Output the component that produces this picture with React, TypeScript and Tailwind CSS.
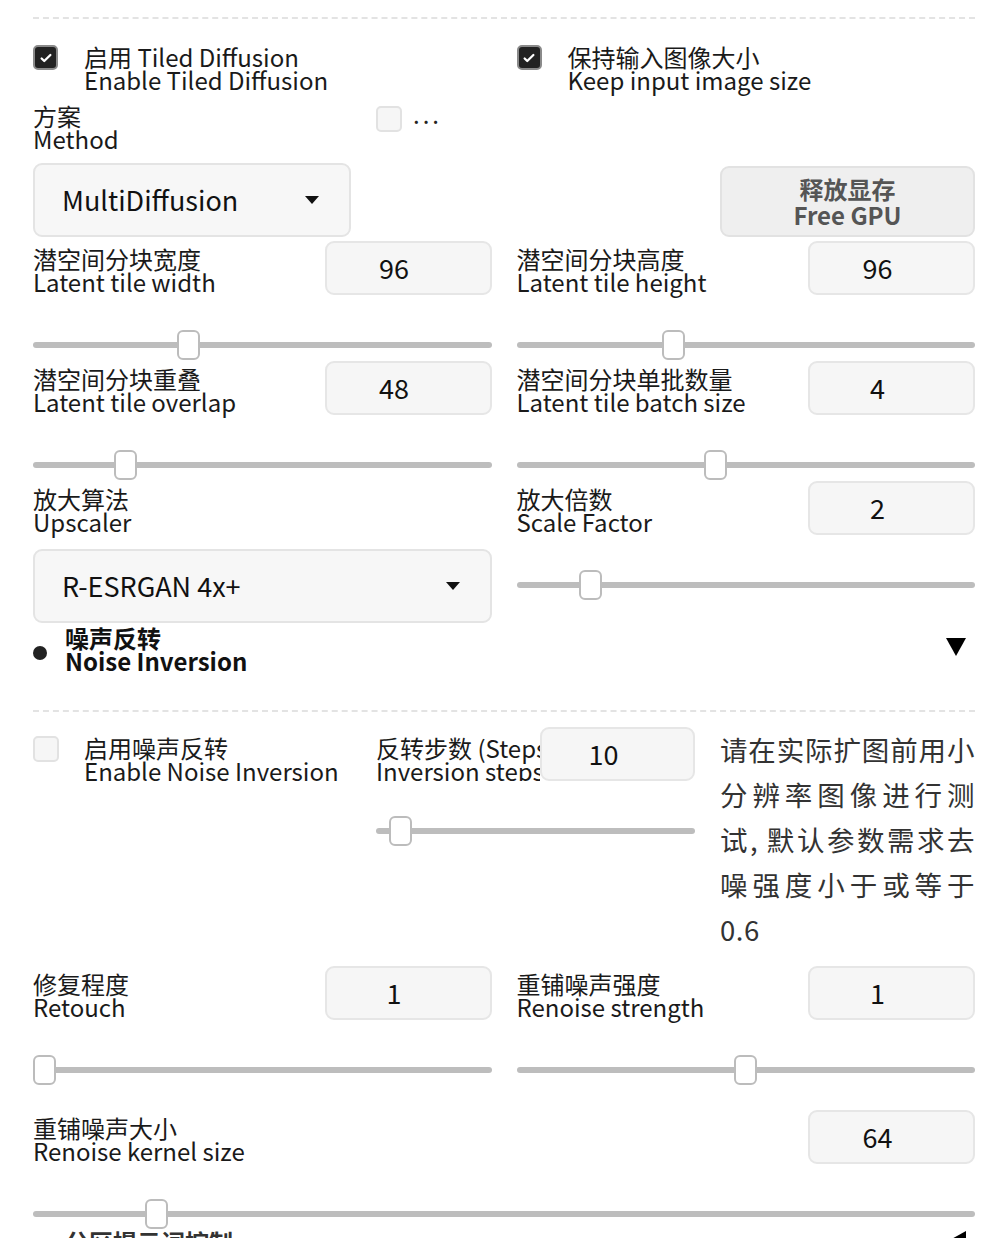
import React from 'react';

const FONT = "font-['Noto_Sans_CJK_SC','Noto_Sans',sans-serif]";

const Check = ({ checked }: { checked: boolean }) =>
  checked ? (
    <div className="w-[25px] h-[25px] shrink-0 rounded-[5px] bg-[#222] border-2 border-[#8a8a8a] flex items-center justify-center">
      <svg viewBox="0 0 16 16" className="w-[14px] h-[14px]">
        <path d="M3 8.5l3 3 7-7" fill="none" stroke="#fff" strokeWidth="2.6" strokeLinecap="round" strokeLinejoin="round" />
      </svg>
    </div>
  ) : (
    <div className="w-[26px] h-[26px] shrink-0 rounded-[5px] bg-[#f6f6f6] border-2 border-[#e2e2e2]" />
  );

const Label = ({ zh, en, bold }: { zh: string; en: string; bold?: boolean }) => (
  <div className={`text-[24px] leading-none whitespace-nowrap ${bold ? 'font-bold text-[#111]' : 'text-[#1a1a1a]'}`}>
    <div className="h-[23px]">{zh}</div>
    <div className="h-[25px]">{en}</div>
  </div>
);

const NumBox = ({ value, w = 'w-[167px]' }: { value: string; w?: string }) => (
  <div className={`${w} h-[54px] shrink-0 rounded-[9px] bg-[#f6f6f6] border-2 border-[#e6e6e6] flex items-center justify-center pr-[28px] text-[27px] text-[#111]`}>
    {value}
  </div>
);

// f = thumb position as a fraction of the free track length
const Slider = ({ f }: { f: number }) => (
  <div className="relative h-[66px]">
    <div className="absolute left-0 right-0 top-[47px] h-[6px] rounded-full bg-[#bdbdbd]" />
    <div
      className="absolute top-[35px] w-[23px] h-[30px] rounded-[6px] bg-white border-2 border-[#bcbcbc]"
      style={{ left: `calc((100% - 23px) * ${f})` }}
    />
  </div>
);

const SliderBlock = ({ zh, en, value, f, w }: { zh: string; en: string; value: string; f: number; w?: string }) => (
  <div className="flex flex-col">
    <div className="flex justify-between h-[54px]">
      <div className="pt-[6px]">
        <Label zh={zh} en={en} />
      </div>
      <NumBox value={value} w={w} />
    </div>
    <Slider f={f} />
  </div>
);

const Caret = () => (
  <svg viewBox="0 0 14 8" className="w-[14px] h-[8px]">
    <path d="M0 0h14L7 8z" fill="#111" />
  </svg>
);

const Dropdown = ({ value, h }: { value: string; h: string }) => (
  <div className={`${h} rounded-[9px] bg-[#f7f7f7] border-2 border-[#e4e4e4] flex items-center justify-between pl-[27px] pr-[30px] text-[27px] text-[#111]`}>
    <span>{value}</span>
    <Caret />
  </div>
);

export default function App() {
  return (
    <div className={`${FONT} bg-white h-[1238px] overflow-hidden pl-[33px] pr-[25px] pt-[17px]`}>
      <div className="border-t-2 border-dashed border-[#e3e3e3]" />

      {/* Tiled Diffusion settings */}
      <div className="grid grid-cols-2 gap-x-[25px] pt-[26px]">
        <div className="flex flex-col">
          <div className="flex items-start gap-[26px] h-[50px]">
            <Check checked />
            <Label zh="启用 Tiled Diffusion" en="Enable Tiled Diffusion" />
          </div>
          <div className="flex items-start mt-[9px] h-[48px]">
            <div className="w-[343px]">
              <Label zh="方案" en="Method" />
            </div>
            <div className="flex items-center gap-[11px] mt-[2px]">
              <Check checked={false} />
              <span className="text-[24px] leading-none text-[#222] -mt-[10px] tracking-[3px]">...</span>
            </div>
          </div>
          <div className="mt-[11px] mb-[4px] w-[318px]">
            <Dropdown value="MultiDiffusion" h="h-[74px]" />
          </div>
        </div>
        <div className="flex flex-col">
          <div className="flex items-start gap-[26px] h-[50px]">
            <Check checked />
            <Label zh="保持输入图像大小" en="Keep input image size" />
          </div>
          <div className="flex-1" />
          <div className="self-end w-[255px] h-[71px] mb-[4px] rounded-[9px] bg-[#efefef] border-2 border-[#e2e2e2] flex flex-col items-center justify-center text-[24px] leading-none font-bold text-[#555]">
            <div className="h-[26px]">释放显存</div>
            <div>Free GPU</div>
          </div>
        </div>
      </div>

      <div className="grid grid-cols-2 gap-x-[25px]">
        <SliderBlock zh="潜空间分块宽度" en="Latent tile width" value="96" f={0.331} />
        <SliderBlock zh="潜空间分块高度" en="Latent tile height" value="96" f={0.335} />
        <SliderBlock zh="潜空间分块重叠" en="Latent tile overlap" value="48" f={0.186} />
        <SliderBlock zh="潜空间分块单批数量" en="Latent tile batch size" value="4" f={0.43} />
        <div className="flex flex-col">
          <div className="pt-[6px]">
            <Label zh="放大算法" en="Upscaler" />
          </div>
          <div className="mt-[14px]">
            <Dropdown value="R-ESRGAN 4x+" h="h-[74px]" />
          </div>
        </div>
        <SliderBlock zh="放大倍数" en="Scale Factor" value="2" f={0.143} />
      </div>

      {/* Noise Inversion accordion */}
      <div className="flex items-center justify-between mt-[1px] h-[52px]">
        <div className="flex items-center gap-[18px]">
          <div className="w-[14px] h-[14px] rounded-full bg-[#222] mt-[5px]" />
          <Label zh="噪声反转" en="Noise Inversion" bold />
        </div>
        <svg viewBox="0 0 20 18" className="w-[20px] h-[18px] mr-[9px] -mt-[6px]">
          <path d="M0 0h20L10 18z" fill="#000" />
        </svg>
      </div>
      <div className="mt-[34px] border-t-2 border-dashed border-[#e3e3e3]" />

      <div className="grid grid-cols-[318px_319px_1fr] gap-x-[25px] pt-[15px]">
        <div className="flex items-start gap-[25px] pt-[9px]">
          <Check checked={false} />
          <Label zh="启用噪声反转" en="Enable Noise Inversion" />
        </div>
        <div className="flex flex-col">
          <div className="flex h-[54px]">
            <div className="flex-1 overflow-hidden pt-[9px]">
              <Label zh="反转步数 (Steps)" en="Inversion steps" />
            </div>
            <NumBox value="10" w="w-[155px]" />
          </div>
          <Slider f={0.044} />
        </div>
        <p className="text-[27.5px] leading-[45px] text-justify text-[#333] tracking-[0.5px]">
          请在实际扩图前用小分辨率图像进行测试, 默认参数需求去噪强度小于或等于0.6
        </p>
      </div>

      <div className="grid grid-cols-2 gap-x-[25px] mt-[14px]">
        <SliderBlock zh="修复程度" en="Retouch" value="1" f={0} />
        <SliderBlock zh="重铺噪声强度" en="Renoise strength" value="1" f={0.5} />
      </div>

      <div className="mt-[24px]">
        <SliderBlock zh="重铺噪声大小" en="Renoise kernel size" value="64" f={0.122} />
      </div>

      {/* Region prompt control accordion (cut off) */}
      <div className="relative flex items-start justify-between">
        <div className="pl-[32px] text-[24px] leading-none font-bold text-[#333]">分区提示词控制</div>
        <svg viewBox="0 0 18 20" className="w-[18px] h-[20px] mr-[9px] mt-[1px]">
          <path d="M18 0v20L0 10z" fill="#000" />
        </svg>
      </div>
    </div>
  );
}
